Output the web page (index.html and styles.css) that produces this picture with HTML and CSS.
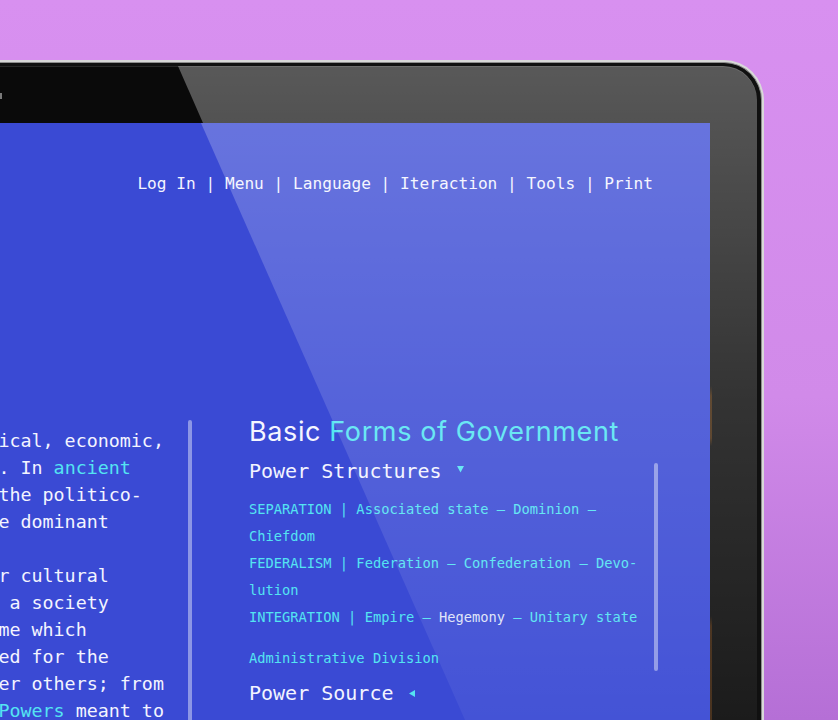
FILE: index.html
```html
<!DOCTYPE html>
<html lang="en">
<head>
<meta charset="utf-8">
<title>Basic Forms of Government</title>
<link rel="stylesheet" href="styles.css">
</head>
<body>
<div class="scene">
  <div class="laptop">
    <div class="rim">
      <div class="bezel">
        <div class="bezel-glare"></div>
        <span class="camera"></span>
        <span class="hinge"></span>
        <div class="screen">
          <nav class="topnav"><a href="#">Log In</a> | <a href="#">Menu</a> | <a href="#">Language</a> | <a href="#">Iteraction</a> | <a href="#">Tools</a> | <a href="#">Print</a></nav>
          <main class="content">
            <div class="intro">
              <p><span class="ln">s, the political, economic,</span><span class="ln">and military. In <a class="link" href="#">ancient</a></span><span class="ln">times often the politico-</span><span class="ln">religion, the dominant</span></p>
              <p><span class="ln">social, other cultural</span><span class="ln">forces shape a society</span><span class="ln">in some regime which</span><span class="ln">is established for the</span><span class="ln">one group over others; from</span><span class="ln"><a class="link" href="#">Division of Powers</a> meant to</span></p>
            </div>
            <div class="divider"></div>
            <section class="forms">
              <h1>Basic <span class="hl">Forms of Government</span></h1>
              <div class="panel">
                <div class="panel-body">
                  <h2>Power Structures<svg class="tri-down" width="7" height="7" viewBox="0 0 7 7"><polygon points="0,0 7,0 3.5,6.5" fill="#54e4f2"/></svg></h2>
                  <ul class="items">
                    <li>SEPARATION | Associated state – Dominion – Chiefdom</li>
                    <li>FEDERALISM | Federation – Confederation – Devo&shy;lution</li>
                    <li>INTEGRATION | Empire – <span class="pale">Hegemony</span> – Unitary state</li>
                  </ul>
                  <p class="admin">Administrative Division</p>
                </div>
                <div class="scrollbar"></div>
              </div>
              <h2 class="source">Power Source<svg class="tri-left" width="6" height="7" viewBox="0 0 6 7"><polygon points="6,0 6,7 0,3.5" fill="#54e4f2"/></svg></h2>
            </section>
          </main>
          <div class="screen-glare"></div>
        </div>
      </div>
    </div>
  </div>
</div>
</body>
</html>
```

FILE: styles.css
```css
html, body {
  margin: 0;
  padding: 0;
}

body {
  width: 838px;
  height: 720px;
  overflow: hidden;
  font-family: "DejaVu Sans Mono", monospace;
}

.scene {
  width: 838px;
  height: 720px;
  padding-top: 60px;
  box-sizing: border-box;
  overflow: hidden;
  background: linear-gradient(to bottom, #d890f0 0%, #d18ae9 55%, #b56fd6 100%);
}

.laptop {
  margin-left: -230px;
  width: 994px;
  height: 660px;
  box-sizing: border-box;
  padding: 2px 2px 0 2px;
  background: #d8d8d8;
  border-radius: 40px 40px 0 0;
}

.rim {
  height: 100%;
  box-sizing: border-box;
  border: 1px solid #8e8e8e;
  border-bottom: 0;
  padding: 3px 4px 0 4px;
  background: #101010;
  border-radius: 38px 38px 0 0;
}

.bezel {
  position: relative;
  height: 654px;
  box-sizing: border-box;
  padding: 57px 47px 0 43px;
  background: #0a0a0a;
  border-radius: 34px 34px 0 0;
  overflow: hidden;
  box-shadow: inset 0 1px 0 rgba(255, 255, 255, 0.12);
}

.bezel-glare {
  position: absolute;
  inset: 0;
  background: linear-gradient(to bottom, rgba(255, 255, 255, 0.32) 0%, rgba(255, 255, 255, 0.17) 51%, rgba(255, 255, 255, 0.07) 100%);
  clip-path: polygon(401px 0, 100% 0, 100% 100%, 688px 100%);
  pointer-events: none;
}

.camera {
  position: absolute;
  left: 223px;
  top: 27px;
  width: 2px;
  height: 6px;
  background: #7a7a7a;
}

.hinge {
  position: absolute;
  left: 933px;
  top: 0;
  width: 2px;
  height: 100%;
  background: linear-gradient(to bottom, transparent 0, transparent 320px, rgba(140, 95, 50, 0.5) 330px, rgba(140, 95, 50, 0.5) 372px, transparent 380px, transparent 550px, rgba(110, 70, 35, 0.55) 560px, rgba(110, 70, 35, 0.55) 100%);
}

.screen {
  position: relative;
  height: 597px;
  box-sizing: border-box;
  padding: 51px 57px 0 46px;
  background: #3a4ad4;
  overflow: hidden;
  color: #f3f4ff;
}

.screen-glare {
  position: absolute;
  inset: 0;
  background: linear-gradient(to bottom, rgba(255, 255, 255, 0.23) 0%, rgba(255, 255, 255, 0.14) 46%, rgba(255, 255, 255, 0.05) 100%);
  clip-path: polygon(381px 0, 100% 0, 100% 100%, 645px 100%);
  pointer-events: none;
}

.topnav {
  text-align: right;
  font-size: 16.17px;
  line-height: 20px;
  color: #f3f4ff;
  white-space: nowrap;
}

.topnav a {
  color: inherit;
  text-decoration: none;
}

.content {
  display: flex;
  align-items: flex-start;
  margin-top: 222px;
}

.intro {
  width: 302px;
  flex: none;
  margin-top: 11px;
  font-size: 18.33px;
  line-height: 27px;
}

.intro p {
  margin: 0 0 27px 0;
}

.ln {
  display: block;
  white-space: pre;
}

.link {
  color: #54e4f2;
  text-decoration: none;
}

.divider {
  flex: none;
  width: 4px;
  height: 420px;
  margin-left: 20px;
  margin-top: 4px;
  border-radius: 2px;
  background: rgba(255, 255, 255, 0.42);
}

.forms {
  margin-left: 57px;
  width: 409px;
  flex: none;
}

.forms h1 {
  margin: 0;
  font-family: Inter, "Noto Sans", sans-serif;
  font-weight: 400;
  font-size: 27px;
  letter-spacing: 0.62px;
  line-height: 32px;
  color: #f5f6ff;
  white-space: nowrap;
}

.hl {
  color: #54e4f2;
}

.panel {
  display: flex;
  justify-content: space-between;
  margin-top: 10px;
  width: 409px;
}

.panel-body {
  flex: none;
}

.forms h2 {
  margin: 0;
  font-weight: 400;
  font-size: 20px;
  line-height: 27px;
  color: #f3f4ff;
  white-space: nowrap;
}

.tri-down {
  margin-left: 15px;
  vertical-align: 5px;
}

.tri-left {
  margin-left: 15px;
  vertical-align: 3px;
}

.items {
  list-style: none;
  margin: 11px 0 0 0;
  padding: 0;
  font-size: 13.72px;
  line-height: 27px;
  width: 47.5ch;
  color: #54e4f2;
  hyphens: manual;
}

.pale {
  color: #dfe3f8;
}

.admin {
  margin: 14px 0 0 0;
  font-size: 13.72px;
  line-height: 27px;
  color: #54e4f2;
}

.scrollbar {
  flex: none;
  width: 4px;
  margin-top: 5px;
  margin-bottom: 1.5px;
  border-radius: 2px;
  background: rgba(255, 255, 255, 0.42);
}

.forms h2.source {
  margin-top: 7.5px;
}
```
